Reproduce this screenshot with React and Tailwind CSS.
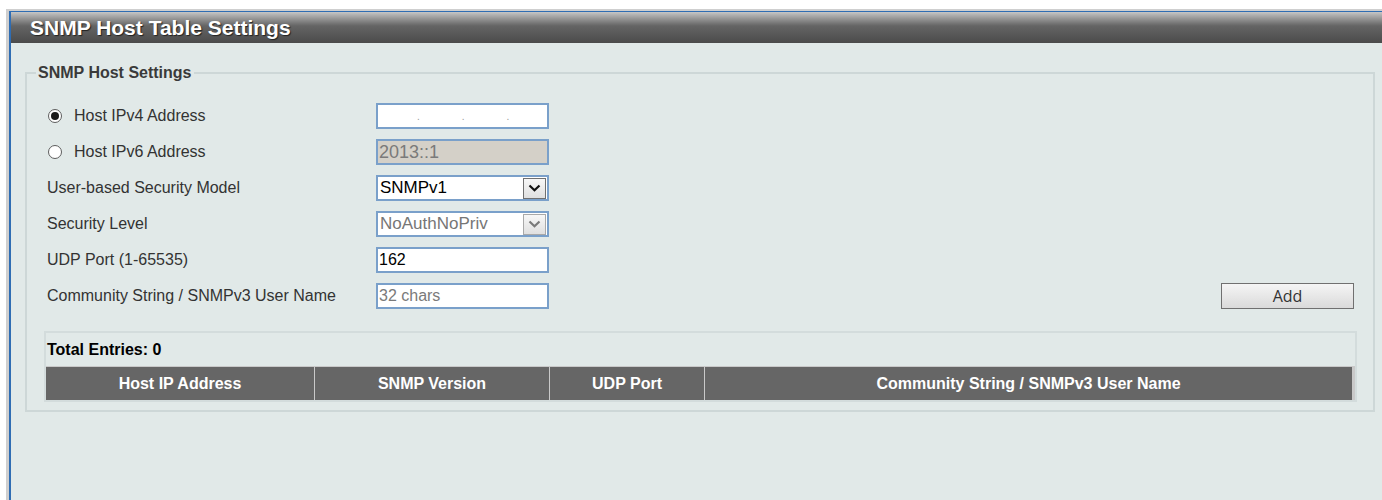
import React from 'react';

const ARIAL = { fontFamily: '"Liberation Sans", Arial, sans-serif' };

const Radio = ({ checked }) => (
  <span className="flex h-[14px] w-[14px] items-center justify-center rounded-full border border-[#5e5e5e] bg-white">
    {checked && <span className="h-[8px] w-[8px] rounded-full bg-[#1a1a1a]" />}
  </span>
);

const Chevron = ({ color }) => (
  <svg width="13" height="8" viewBox="0 0 13 8">
    <path d="M1.5 1.5 L6.5 6.2 L11.5 1.5" fill="none" stroke={color} strokeWidth="2.2" />
  </svg>
);

const SelectBox = ({ value, disabled }) => (
  <div className="flex h-[26px] w-[173px] items-center justify-between border-2 border-[#7aa0ca] bg-white pl-[2px] pr-[1px]">
    <span className={`text-[17px] ${disabled ? 'text-[#767676]' : 'text-black'}`}>{value}</span>
    <span
      className={`flex h-[21px] w-[23px] items-center justify-center border bg-gradient-to-b from-[#f7f7f7] to-[#e0e0e0] ${
        disabled ? 'border-[#a9a9a9]' : 'border-[#707070]'
      }`}
    >
      <Chevron color={disabled ? '#7a7a7a' : '#111'} />
    </span>
  </div>
);

const Field = ({ children, className = '' }) => (
  <div className={`flex h-[26px] w-[173px] items-center border-2 border-[#7aa0ca] pl-[1px] ${className}`}>
    {children}
  </div>
);

const Row = ({ label, radio, checked, children }) => (
  <div className="flex h-[26px] items-center">
    <div className="flex w-[329px] items-center text-[16px] text-[#333]">
      {radio && (
        <span className="ml-px mr-[12px]">
          <Radio checked={checked} />
        </span>
      )}
      {label}
    </div>
    {children}
  </div>
);

const columns = ['Host IP Address', 'SNMP Version', 'UDP Port', 'Community String / SNMPv3 User Name'];

export default function App() {
  return (
    <div className="h-[500px] overflow-hidden bg-white pl-[6px] pt-[9px]" style={ARIAL}>
      <div className="h-full border-l-[3px] border-t-2 border-[#cfcfcf]">
        <div className="h-full border-l-2 border-t border-[#2f6db3] bg-[#e1e9e8]">
          <div className="flex h-[31px] items-center bg-gradient-to-b from-[#c6c6c6] via-[#646464] via-45% to-[#4b4b4b] pl-[19px]">
            <h1 className="text-[21px] font-bold leading-none text-white [text-shadow:1px_1px_1px_#222]">SNMP Host Table Settings</h1>
          </div>

          <fieldset className="ml-[14px] mr-[7px] mt-[18px] border-2 border-[#cdd7d7] pb-[8px] pl-[20px] pr-[19px] pt-[18px]">
            <legend className="-ml-[11px] px-[2px] text-[16px] font-bold text-[#3a3a3a]">SNMP Host Settings</legend>

            <div className="flex flex-col gap-[10px]">
              <Row label="Host IPv4 Address" radio checked>
                <Field className="bg-white text-[#9a9a9a]">
                  <span className="ml-[38px] text-[10px]">.</span>
                  <span className="ml-[42px] text-[10px]">.</span>
                  <span className="ml-[42px] text-[10px]">.</span>
                </Field>
              </Row>
              <Row label="Host IPv6 Address" radio>
                <Field className="bg-[#d4d0c8] text-[18px] text-[#7a7a7a]">2013::1</Field>
              </Row>
              <Row label="User-based Security Model">
                <SelectBox value="SNMPv1" />
              </Row>
              <Row label="Security Level">
                <SelectBox value="NoAuthNoPriv" disabled />
              </Row>
              <Row label="UDP Port (1-65535)">
                <Field className="bg-white text-[16px] text-black">162</Field>
              </Row>
              <div className="flex items-center">
                <Row label="Community String / SNMPv3 User Name">
                  <Field className="bg-white text-[16px] text-[#7a7a7a]">32 chars</Field>
                </Row>
                <button
                  className="ml-auto h-[26px] w-[133px] border border-[#707070] bg-gradient-to-b from-[#f5f5f5] to-[#dadada] text-[16px] text-[#333]"
                  style={{ fontFamily: '"Open Sans", "Liberation Sans", sans-serif' }}
                >
                  Add
                </button>
              </div>
            </div>

            <div
              className="mx-[-3px] mt-[22px] border-2 border-[#d3dcdc]"
              style={{ fontFamily: '"Liberation Sans Narrow", "Arial Narrow", "Liberation Sans", sans-serif' }}
            >
              <div className="flex h-[33px] items-center pl-px text-[16px] font-bold text-black">Total Entries: 0</div>
              <div className="grid h-[34px] grid-cols-[268px_235px_155px_1fr] border-r-[3px] border-t border-[#c9c9c9] bg-[#666]">
                {columns.map((c, i) => (
                  <div
                    key={c}
                    className={`flex items-center justify-center text-[16px] font-bold text-white ${i > 0 ? 'border-l border-[#c9c9c9]' : ''}`}
                  >
                    {c}
                  </div>
                ))}
              </div>
            </div>
          </fieldset>
        </div>
      </div>
    </div>
  );
}
